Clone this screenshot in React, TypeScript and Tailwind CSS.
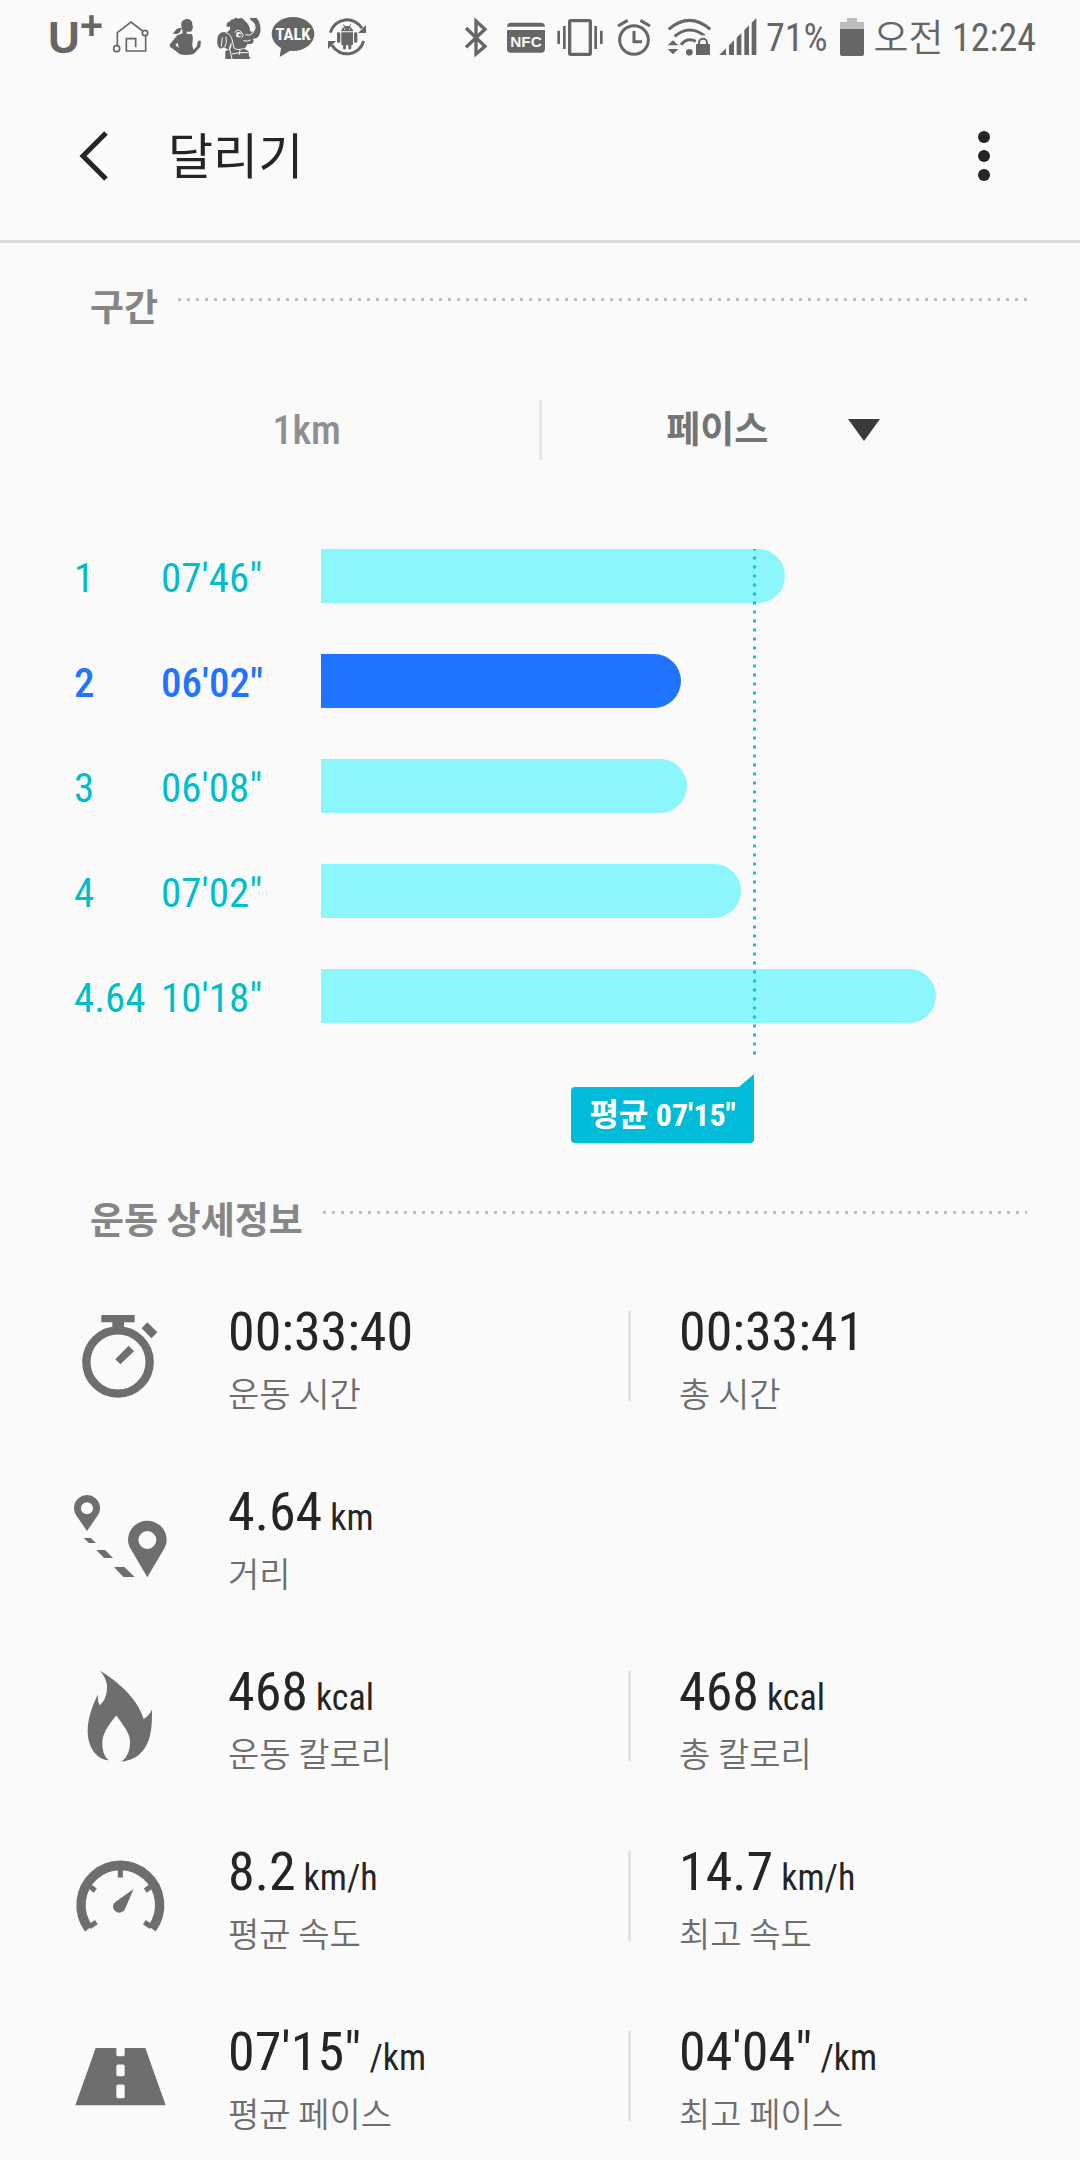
import type { ReactNode } from 'react';

type Split = { label: string; pace: string; seconds: number; best?: boolean };

const splits: Split[] = [
  { label: '1', pace: `07'46"`, seconds: 466 },
  { label: '2', pace: `06'02"`, seconds: 362, best: true },
  { label: '3', pace: `06'08"`, seconds: 368 },
  { label: '4', pace: `07'02"`, seconds: 422 },
  { label: '4.64', pace: `10'18"`, seconds: 618 },
];

const averageSeconds = 435;
const longest = Math.max(...splits.map((s) => s.seconds));
const toPercent = (seconds: number) => `${(seconds / longest) * 100}%`;

function StatusIcon({ viewBox, className, children }: { viewBox: string; className: string; children: ReactNode }) {
  return (
    <svg viewBox={viewBox} className={`h-[45px] shrink-0 ${className}`} fill="currentColor" aria-hidden="true">
      {children}
    </svg>
  );
}

function StatusBar() {
  return (
    <div className="flex h-[75px] items-center justify-between pr-11 pl-12 text-[#666666]">
      <div className="flex items-center">
        <span className="flex w-[64px] items-start font-['Liberation_Sans',sans-serif] font-bold">
          <span className="text-[44px] leading-[48px]">U</span>
          <span className="text-[40px] leading-[22px]">+</span>
        </span>
        {/* smart home */}
        <StatusIcon viewBox="246 45 114 135" className="w-[38px]">
          <g fill="none" stroke="currentColor" strokeWidth="5">
            <path d="M262 137V98L303 66L338 93M347 108V153H289V116H317V142" />
            <circle cx="345" cy="99" r="8" />
            <circle cx="260" cy="146" r="9" />
          </g>
        </StatusIcon>
        {/* fitness */}
        <StatusIcon viewBox="414 45 102 135" className="ml-[18px] w-[34px]">
          <path d="M454 68Q460 56 474 57Q488 60 487 74L489 80L486 92Q478 98 470 94L470 102H484Q490 106 488 122Q484 136 490 149L501 139L503 125Q508 119 513 124L511 140L492 161Q470 168 450 163L421 141Q416 136 421 131L442 106L458 100L457 88Q452 80 454 68Z" />
          <path d="M456 84Q440 82 436 92Q432 99 427 100Q440 105 448 98Q453 92 456 84Z" />
          <path d="M443 128L436 135L446 144Z" fill="#fafafa" />
        </StatusIcon>
        {/* elephant mascot */}
        <StatusIcon viewBox="558 45 138 135" className="ml-[14px] w-[46px]">
          <path d="M590 80Q588 66 601 64Q600 56 612 58Q614 50 624 56Q638 50 644 62Q660 74 660 92Q668 100 675 90Q680 78 670 66Q658 60 660 54L680 54Q694 72 691 95Q686 118 668 116Q676 126 664 132L652 132Q650 142 640 146Q662 152 656 164L661 177H586V152L600 150Q606 140 604 126Q598 138 596 150L582 142L570 146Q560 138 562 124Q560 104 576 97L592 96Q602 92 600 80Z" />
          <g fill="none" stroke="#fafafa" strokeWidth="3">
            <path d="M586 97Q604 102 608 126L612 144Q620 152 640 146" />
            <path d="M614 98Q622 84 634 96Q644 108 634 114M664 64Q676 82 670 98Q660 110 646 104" />
            <path d="M577 112L574 140M588 110Q592 128 584 142M600 150L606 177M606 162L630 158L656 158M630 148L628 164" />
            <path d="M640 122Q652 126 662 120" />
          </g>
          <circle cx="626" cy="104" r="8" fill="#fafafa" />
          <circle cx="629" cy="105" r="4" />
        </StatusIcon>
        {/* messenger */}
        <StatusIcon viewBox="723 45 132 135" className="ml-[9px] w-[44px]">
          <ellipse cx="789" cy="102" rx="64" ry="51" />
          <path d="M754 138L749 171L784 150Z" />
          <text x="789" y="121" textAnchor="middle" fill="#fafafa" className="font-['Roboto_Condensed',sans-serif] text-[50px] font-bold">
            TALK
          </text>
        </StatusIcon>
        {/* android sync */}
        <StatusIcon viewBox="891 45 120 135" className="ml-[12px] w-[40px]">
          <g fill="none" stroke="currentColor" strokeWidth="9">
            <path d="M901 98A52 52 0 0 1 996 85" />
            <path d="M1001 123A52 52 0 0 1 906 136" />
          </g>
          <path d="M1008 75V99H984ZM894 123H918L894 147Z" />
          <path d="M933 94Q935 83 943 80L939 74L941 73L946 79Q951 77 957 79L962 73L964 74L960 80Q968 84 970 94Z" />
          <path d="M934 97H969V133Q969 136 964 136V144A4 4 0 0 1 955 144V136H948V144A4 4 0 0 1 939 144V136Q934 136 934 133Z" />
          <rect x="921" y="97" width="10" height="31" rx="4" />
          <rect x="972" y="97" width="10" height="31" rx="4" />
          <circle cx="944" cy="87" r="2" fill="#fafafa" />
          <circle cx="959" cy="87" r="2" fill="#fafafa" />
        </StatusIcon>
      </div>

      <div className="flex items-center">
        {/* bluetooth */}
        <StatusIcon viewBox="69 45 72 135" className="w-[24px]">
          <path d="M75 84L132 139L105 162V63L132 88L75 142" fill="none" stroke="currentColor" strokeWidth="10" />
        </StatusIcon>
        {/* nfc */}
        <StatusIcon viewBox="195 45 120 135" className="ml-[18px] w-[40px]">
          <path d="M198 80Q199 68 210 68H300Q311 68 312 80Z" />
          <path d="M198 90H312V146Q312 158 300 158H210Q198 158 198 146Z" />
          <text x="255" y="142" textAnchor="middle" fill="#fafafa" className="font-['Liberation_Sans',sans-serif] text-[46px] font-bold">
            NFC
          </text>
        </StatusIcon>
        {/* vibrate */}
        <StatusIcon viewBox="345 45 144 135" className="ml-[10px] w-[48px]">
          <rect x="386" y="62" width="62" height="101" rx="3" fill="none" stroke="currentColor" strokeWidth="10" />
          <path d="M353 92V132M370 78V147M464 78V147M481 92V132" stroke="currentColor" strokeWidth="8" />
        </StatusIcon>
        {/* alarm */}
        <StatusIcon viewBox="525 45 108 135" className="ml-[12px] w-[36px]">
          <g fill="none" stroke="currentColor" strokeWidth="9">
            <circle cx="579" cy="120" r="43" />
            <path d="M579 93V125H603M531 78L560 61M627 78L598 61" />
          </g>
        </StatusIcon>
        {/* wifi */}
        <StatusIcon viewBox="678 45 132 135" className="ml-[15px] w-[44px]">
          <g fill="none" stroke="currentColor" strokeWidth="9">
            <path d="M683 88Q745 34 808 88" />
            <path d="M701 109Q745 72 790 107" />
            <path d="M720 134Q740 111 764 124" />
          </g>
          <circle cx="745" cy="157" r="10" />
          <path d="M680 136L696 121L712 136ZM680 147H712L696 163Z" />
          <path d="M773 135V126A13 13 0 0 1 799 126V135" fill="none" stroke="#fafafa" strokeWidth="14" />
          <path d="M774 135V128A12 12 0 0 1 798 128V135" fill="none" stroke="currentColor" strokeWidth="6" />
          <rect x="765" y="132" width="42" height="33" rx="2" />
        </StatusIcon>
        {/* signal */}
        <StatusIcon viewBox="834 45 114 135" className="ml-[8px] w-[38px]">
          <path d="M835 165L855 145V165ZM864 165V136L879 121V165ZM887 165V113L901 99V165ZM910 165V90L924 76V165ZM932 165V68L946 54V165Z" />
        </StatusIcon>
        <span className="ml-[9px] text-[38px] leading-[44px]">71%</span>
        {/* battery */}
        <StatusIcon viewBox="297 45 72 135" className="ml-[12px] w-[24px]">
          <path d="M297 88V66H318V54H348V66H369V88Z" fill="#bdbdbd" />
          <path d="M297 87H369V162Q369 168 363 168H303Q297 168 297 162Z" />
        </StatusIcon>
        <span className="ml-[10px] text-[38px] leading-[44px] font-[350]">
          오전 <span className="font-normal">12:24</span>
        </span>
      </div>
    </div>
  );
}

function Header() {
  return (
    <header className="flex h-[168px] items-center border-b-[3px] border-[#d9d9d9] pr-[68px] pb-[3px] pl-[66px] text-[#252525]">
      <button type="button" aria-label="뒤로" className="flex h-14 w-14 items-center justify-center">
        <svg viewBox="0 0 30 50" className="h-[50px] w-[30px]" fill="none" stroke="currentColor" strokeWidth="5">
          <path d="M27 2L4 25L27 48" />
        </svg>
      </button>
      <h1 className="ml-[46px] flex-1 pt-[3px] text-[49px] leading-[64px]">달리기</h1>
      <button type="button" aria-label="더보기" className="flex h-14 w-[56px] items-center justify-center">
        <svg viewBox="0 0 12 50" className="h-[50px] w-3" fill="currentColor">
          <circle cx="6" cy="6" r="6" />
          <circle cx="6" cy="25" r="6" />
          <circle cx="6" cy="44" r="6" />
        </svg>
      </button>
    </header>
  );
}

function SectionTitle({ children }: { children: ReactNode }) {
  return (
    <div className="flex items-start gap-5 pr-[53px] pl-[90px]">
      <h2 className="pt-[2px] text-[37px] leading-[48px] font-bold text-[#868686]">{children}</h2>
      <div className="mt-[15px] h-[3px] flex-1 bg-[linear-gradient(90deg,#bebebe_3px,transparent_3px)] bg-size-[9px_3px]" />
    </div>
  );
}

function SplitChart() {
  return (
    <div className="pr-[144px] pl-[74px]">
      <div className="relative pb-9">
        <ul className="flex flex-col gap-[51px]">
          {splits.map((split) => (
            <li
              key={split.label}
              className={`flex h-[54px] items-center text-[41px] ${split.best ? 'font-medium text-[#2074ff]' : 'text-[#00bec9]'}`}
            >
              <span className="w-[87px] pt-[6px]">{split.label}</span>
              <span className="w-[160px] pt-[6px]">{split.pace}</span>
              <div className="h-full flex-1">
                <div
                  className={`h-full rounded-r-full ${split.best ? 'bg-[#2074ff]' : 'bg-[#8df5fc]'}`}
                  style={{ width: toPercent(split.seconds) }}
                />
              </div>
            </li>
          ))}
        </ul>
        {/* average marker runs over the bars */}
        <div className="absolute inset-y-0 right-0 left-[247px]">
          <div
            className="h-full bg-[linear-gradient(180deg,#17bfd0_3px,transparent_3px)] bg-size-[3px_9px] bg-right bg-repeat-y"
            style={{ width: toPercent(averageSeconds + 2) }}
          />
        </div>
      </div>
      <div className="mt-[15px] pl-[247px]">
        <div className="flex flex-col items-end" style={{ width: toPercent(averageSeconds) }}>
          <svg viewBox="0 0 15 13" className="h-[13px] w-[15px]" fill="#00bcd8" aria-hidden="true">
            <path d="M0 13L15 0V13Z" />
          </svg>
          <p className="rounded-b-[4px] rounded-tl-[4px] bg-[#00bcd8] px-[18px] text-[32px] leading-[56px] font-bold whitespace-nowrap text-white">
            평균 07'15"
          </p>
        </div>
      </div>
    </div>
  );
}

function Metric({ value, unit, label }: { value: string; unit?: string; label: string }) {
  return (
    <div className="flex flex-col gap-2">
      <p className="text-[54px] leading-[62px] text-[#252525]">
        {value}
        {unit && <span className="ml-[8px] text-[36px] leading-none">{unit}</span>}
      </p>
      <p className="text-[34px] leading-[48px] font-[350] text-[#6e6e6e]">{label}</p>
    </div>
  );
}

function DetailRow({ viewBox, icon, children, extra }: { viewBox: string; icon: ReactNode; children: ReactNode; extra?: ReactNode }) {
  return (
    <li className="flex items-start pr-[76px] pl-[70px]">
      <svg
        viewBox={viewBox}
        preserveAspectRatio="none"
        className="mt-[10px] h-[90px] w-[100px] shrink-0 overflow-visible text-[#6e6e6e]"
        fill="currentColor"
        aria-hidden="true"
      >
        {icon}
      </svg>
      <div className="ml-[58px] flex-1">{children}</div>
      {extra && <div className="mt-[10px] h-[90px] w-[3px] bg-[#e3e3e3]" />}
      <div className="w-[373px] pl-[48px]">{extra}</div>
    </li>
  );
}

const stopwatch = (
  <>
    <circle cx="204" cy="546" r="95" fill="none" stroke="currentColor" strokeWidth="25" />
    <path d="M154 405H254V427H222V448H187V427H154ZM292 427L322 457L304 475L275 445ZM236 497L252 514L211 553L196 538Z" />
  </>
);

const route = (
  <>
    <path
      fillRule="evenodd"
      d="M111 1053L78 1005A39 39 0 1 1 144 1005ZM111 967A18 18 0 1 0 111 1003A18 18 0 1 0 111 967Z"
    />
    <path
      fillRule="evenodd"
      d="M292 1192L240 1103Q234 1092 234 1080A58 58 0 0 1 350 1080Q350 1092 344 1103ZM292 1053A27 27 0 1 0 292 1107A27 27 0 1 0 292 1053Z"
    />
    <path d="M101 1074H122L138 1089H117ZM139 1110H165L189 1134H162ZM192 1161H223L254 1191H220Z" />
  </>
);

const flame = (
  <path d="M150 147C215 185 265 235 281 287C292 282 300 272 306 260C306 290 306 310 300 335C290 375 265 405 214 411C236 395 241 370 240 350C240 330 220 305 199 277C175 305 157 330 157 355C157 378 162 395 176 407C140 405 114 370 113 325C113 285 125 255 143 216C143 230 145 240 149 247C165 235 172 215 171 190C170 175 162 160 150 147Z" />
);

const gauge = (
  <>
    <path d="M116 896A118 115 0 1 1 306 896" fill="none" stroke="currentColor" strokeWidth="28" />
    <path d="M211 725V748M118 773L136 786M304 773L286 786M118 891L139 877M304 891L283 877" stroke="currentColor" strokeWidth="15" />
    <path d="M251 781L225 839Q218 850 206 850Q189 847 189 830Q190 822 197 818Z" />
  </>
);

const road = (
  <path
    fillRule="evenodd"
    d="M137 1242H199V1261Q199 1266 204 1266H219Q224 1266 224 1261V1242H286L347 1408H76ZM204 1290Q199 1290 199 1295V1319Q199 1324 204 1324H219Q224 1324 224 1319V1295Q224 1290 219 1290ZM204 1348Q199 1348 199 1353V1383Q199 1388 204 1388H219Q224 1388 224 1383V1353Q224 1348 219 1348Z"
  />
);

function Details() {
  return (
    <ul className="flex flex-col gap-[62px]">
      <DetailRow viewBox="60 393 300 270" icon={stopwatch} extra={<Metric value="00:33:41" label="총 시간" />}>
        <Metric value="00:33:40" label="운동 시간" />
      </DetailRow>
      <DetailRow viewBox="60 933 300 270" icon={route}>
        <Metric value="4.64" unit="km" label="거리" />
      </DetailRow>
      <DetailRow viewBox="60 148 300 261" icon={flame} extra={<Metric value="468" unit="kcal" label="총 칼로리" />}>
        <Metric value="468" unit="kcal" label="운동 칼로리" />
      </DetailRow>
      <DetailRow viewBox="60 671 300 261" icon={gauge} extra={<Metric value="14.7" unit="km/h" label="최고 속도" />}>
        <Metric value="8.2" unit="km/h" label="평균 속도" />
      </DetailRow>
      <DetailRow viewBox="60 1193 300 261" icon={road} extra={<Metric value={`04'04"`} unit="/km" label="최고 페이스" />}>
        <Metric value={`07'15"`} unit="/km" label="평균 페이스" />
      </DetailRow>
    </ul>
  );
}

export default function App() {
  return (
    <div className="min-h-screen bg-[#fafafa] pb-5 font-['Roboto_Condensed','Noto_Sans_CJK_KR',sans-serif]">
      <StatusBar />
      <Header />
      <main>
        <section className="pt-10">
          <SectionTitle>구간</SectionTitle>
          <div className="mt-[66px] flex items-center px-[75px]">
            <button type="button" className="flex-1 pt-[2px] text-[40px] leading-[60px] font-medium text-[#8f8f8f]">
              1km
            </button>
            <div className="h-[60px] w-[3px] bg-[#e6e6e6]" />
            <div className="flex flex-1 justify-center">
              <div className="relative">
                <select
                  aria-label="표시 항목"
                  className="h-[60px] appearance-none bg-transparent pt-[2px] pr-[111px] text-[37px] font-bold text-[#757575]"
                >
                  <option>페이스</option>
                  <option>속도</option>
                </select>
                <svg
                  viewBox="0 0 32 22"
                  className="pointer-events-none absolute top-[19px] right-0 h-[22px] w-8"
                  fill="#3a3a3a"
                  aria-hidden="true"
                >
                  <path d="M0 0H32L16 22Z" />
                </svg>
              </div>
            </div>
          </div>
          <div className="mt-[88px]">
            <SplitChart />
          </div>
        </section>
        <section className="pt-[53px]">
          <SectionTitle>운동 상세정보</SectionTitle>
          <div className="mt-[55px]">
            <Details />
          </div>
        </section>
      </main>
    </div>
  );
}
